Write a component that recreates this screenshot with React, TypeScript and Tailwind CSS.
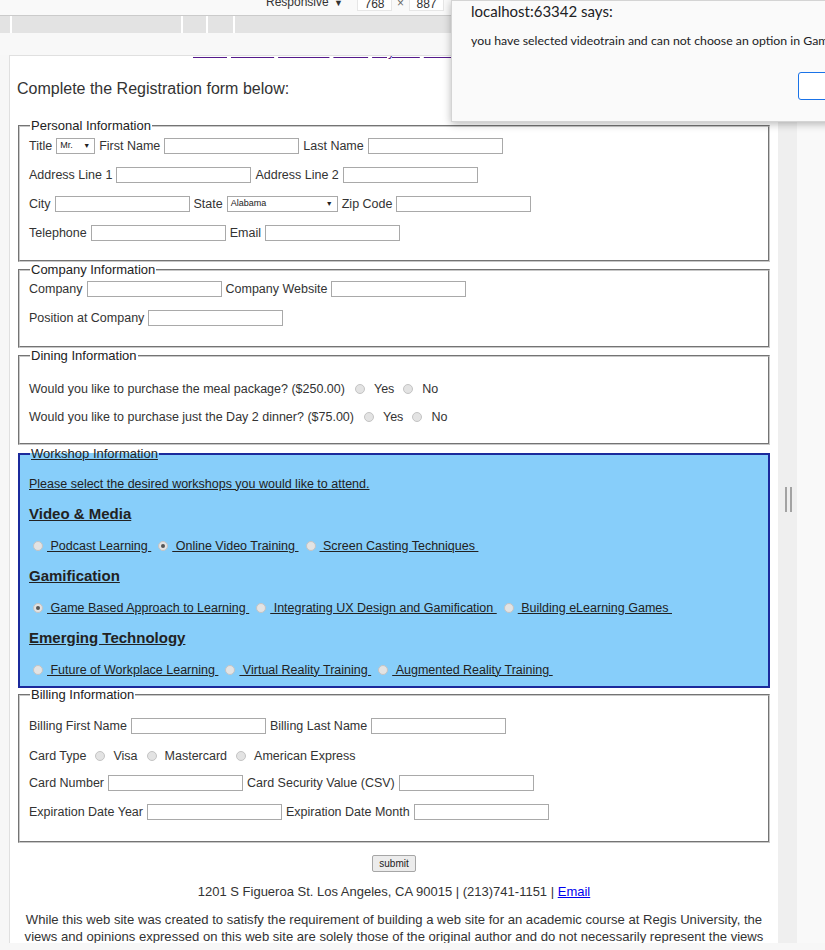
import React from "react";

type Kids = { children?: React.ReactNode; className?: string };

const Field = ({ w = "w-[135px]" }: { w?: string }) => (
  <span className={`h-[16px] ${w} shrink-0 border border-[#a9a9a9] bg-white`} />
);

const Select = ({ value, w }: { value: string; w: string }) => (
  <span
    className={`flex h-[16px] ${w} shrink-0 items-center justify-between border border-[#a9a9a9] bg-white pl-[3px] pr-[4px] text-[9px] text-[#222]`}
  >
    {value}
    <span className="text-[7px]">▼</span>
  </span>
);

const Radio = ({ checked, className = "" }: { checked?: boolean; className?: string }) => (
  <span
    className={`flex h-[10px] w-[10px] shrink-0 items-center justify-center rounded-full border border-[#c4c4c4] bg-[#e3e3e3] ${className}`}
  >
    {checked && <span className="h-[4px] w-[4px] rounded-full bg-[#555]" />}
  </span>
);

const Row = ({ children, className = "" }: Kids) => (
  <div className={`flex h-[20px] items-center gap-[4px] whitespace-nowrap ${className}`}>{children}</div>
);

const Box = ({ title, children, className = "" }: Kids & { title: string }) => (
  <fieldset className={`mx-[8px] border-2 border-[#c8c8c8] [border-style:groove] px-[9px] ${className}`}>
    <legend className="ml-[1px] px-[1px] text-[13px] leading-[15px] text-[#222]">{title}</legend>
    {children}
  </fieldset>
);

const Option = ({ label, checked, first }: { label: string; checked?: boolean; first?: boolean }) => (
  <>
    <Radio checked={checked} className={first ? "ml-[4px]" : "ml-[3px]"} />
    <span className="underline">{"\u00a0" + label + "\u00a0"}</span>
  </>
);

const Topic = ({ children }: Kids) => (
  <div className="mt-[10px] flex h-[20px] items-center text-[15px] font-bold text-[#222] underline">{children}</div>
);

const workshops = [
  {
    name: "Video & Media",
    items: [
      { label: "Podcast Learning" },
      { label: "Online Video Training", checked: true },
      { label: "Screen Casting Techniques" },
    ],
  },
  {
    name: "Gamification",
    items: [
      { label: "Game Based Approach to Learning", checked: true },
      { label: "Integrating UX Design and Gamification" },
      { label: "Building eLearning Games" },
    ],
  },
  {
    name: "Emerging Technology",
    items: [
      { label: "Future of Workplace Learning" },
      { label: "Virtual Reality Training" },
      { label: "Augmented Reality Training" },
    ],
  },
];

export default function App() {
  return (
    <div className="relative h-[950px] w-[825px] overflow-hidden bg-[#f7f7f7] font-['Liberation_Sans',Arial,sans-serif] text-[#333]">
      {/* devtools device toolbar */}
      <div className="flex h-[16px] items-start border-b border-[#cbcbcb] bg-[#f9f9f9] text-[12px] text-[#333]">
        <span className="-mt-[5px] ml-[266px] leading-[14px]">
          Responsive <span className="ml-[2px] text-[9px]">▼</span>
        </span>
        <span className="-mt-[3px] ml-[14px] h-[14px] w-[35px] border border-[#e6e6e6] bg-white text-center leading-[12px]">768</span>
        <span className="-mt-[4px] ml-[5px] leading-[14px] text-[#666]">×</span>
        <span className="-mt-[3px] ml-[5px] h-[14px] w-[35px] border border-[#e6e6e6] bg-white text-center leading-[12px]">887</span>
      </div>
      <div className="flex h-[17px] bg-[#e3e3e3]">
        <span className="ml-[10px] w-[2px] bg-white" />
        <span className="ml-[169px] w-[2px] bg-white" />
        <span className="ml-[23px] w-[2px] bg-white" />
        <span className="ml-[25px] w-[2px] bg-white" />
      </div>
      <div className="h-[22px] bg-[#f8f8f8]" />

      <div className="flex">
        <div className="w-[9px]" />
        <div className="h-[888px] w-[769px] shrink-0 overflow-hidden border-l border-t border-[#e0e0e0] bg-white">
          {/* top nav, mostly scrolled off */}
          <div className="h-[3px] overflow-hidden">
            <div className="-mt-[12px] ml-[183px] flex gap-[4px] text-[13px] leading-[15px] text-[#551a8b] underline">
              <span>About</span>
              <span>Awards</span>
              <span>Activities</span>
              <span>Meals</span>
              <span>Keynote</span>
              <span>Workshops</span>
            </div>
          </div>

          <h2 className="ml-[7px] mt-[21px] text-[16px] leading-[18px] text-[#333]">Complete the Registration form below:</h2>

          <div className="mt-[20px] text-[12.5px]">
            <Box title="Personal Information" className="pb-[17px]">
              <Row className="mt-[3px]">
                Title <Select value="Mr." w="w-[39px]" /> First Name <Field /> Last Name <Field />
              </Row>
              <Row className="mt-[9px]">
                Address Line 1 <Field /> Address Line 2 <Field />
              </Row>
              <Row className="mt-[9px]">
                City <Field /> State <Select value="Alabama" w="w-[111px]" /> Zip Code <Field />
              </Row>
              <Row className="mt-[9px]">
                Telephone <Field /> Email <Field />
              </Row>
            </Box>

            <Box title="Company Information" className="pb-[18px]">
              <Row className="mt-[2px]">
                Company <Field /> Company Website <Field />
              </Row>
              <Row className="mt-[9px]">
                Position at Company <Field />
              </Row>
            </Box>

            <Box title="Dining Information" className="pb-[16px]">
              <Row className="mt-[16px] gap-0">
                Would you like to purchase the meal package? ($250.00)
                <Radio className="ml-[6px] mr-[5px]" />
                Yes
                <Radio className="ml-[5px] mr-[5px]" />
                No
              </Row>
              <Row className="mt-[8px] gap-0">
                Would you like to purchase just the Day 2 dinner? ($75.00)
                <Radio className="ml-[6px] mr-[5px]" />
                Yes
                <Radio className="ml-[5px] mr-[5px]" />
                No
              </Row>
            </Box>

            <fieldset className="mx-[8px] mt-[1px] border-2 border-[#1b2a9c] bg-[#87cefa] px-[9px] pb-[6px]">
              <legend className="ml-[1px] px-[1px] text-[13px] leading-[15px] text-[#222] underline">Workshop Information</legend>
              <div className="mt-[13px] flex h-[20px] items-center text-[#222] underline">
                Please select the desired workshops you would like to attend.
              </div>
              {workshops.map((g) => (
                <div key={g.name}>
                  <Topic>{g.name}</Topic>
                  <Row className="mt-[12px] gap-0 text-[#222]">
                    {g.items.map((it, i) => (
                      <Option key={it.label} label={it.label} checked={it.checked} first={i === 0} />
                    ))}
                  </Row>
                </div>
              ))}
            </fieldset>

            <Box title="Billing Information" className="-mt-[1px] pb-[19px]">
              <Row className="mt-[14px]">
                Billing First Name <Field /> Billing Last Name <Field />
              </Row>
              <Row className="mt-[10px] gap-0">
                Card Type
                <Radio className="ml-[5px] mr-[4px]" />
                Visa
                <Radio className="ml-[5px] mr-[4px]" />
                Mastercard
                <Radio className="ml-[5px] mr-[4px]" />
                American Express
              </Row>
              <Row className="mt-[7px]">
                Card Number <Field /> Card Security Value (CSV) <Field />
              </Row>
              <Row className="mt-[9px]">
                Expiration Date Year <Field /> Expiration Date Month <Field />
              </Row>
            </Box>
          </div>

          <div className="mt-[12px] flex justify-center">
            <span className="flex h-[17px] w-[44px] items-center justify-center rounded-[2px] border border-[#a6a6a6] bg-[#ececec] text-[10px] text-[#222]">
              submit
            </span>
          </div>
          <p className="mt-[12px] text-center text-[13px] leading-[15px] text-[#333]">
            1201 S Figueroa St. Los Angeles, CA 90015 | (213)741-1151 |{" "}
            <span className="text-[#0000ee] underline">Email</span>
          </p>
          <p className="mt-[12px] whitespace-nowrap text-center text-[13.1px] leading-[17px] text-[#333]">
            While this web site was created to satisfy the requirement of building a web site for an academic course at Regis University, the
            <br />
            views and opinions expressed on this web site are solely those of the original author and do not necessarily represent the views
            <br />
            of Regis University.
          </p>
        </div>
        <div className="relative flex flex-1">
          <div className="h-[888px] w-[19px] bg-[#efefef]" />
          <div className="h-[888px] flex-1 bg-[#f9f9f9]" />
          <div className="absolute left-[7px] top-[432px] flex gap-[3px]">
            <span className="h-[25px] w-[2px] bg-[#a3a3a3]" />
            <span className="h-[25px] w-[2px] bg-[#a3a3a3]" />
          </div>
        </div>
      </div>

      {/* alert dialog */}
      <div className="absolute left-[451px] top-0 h-[122px] w-[420px] border border-[#d4d4d4] bg-[#fafafa] font-['Lato','Noto_Sans',sans-serif] text-[#202124] shadow-[0_2px_8px_rgba(0,0,0,0.28)]">
        <div className="ml-[19px] mt-0 text-[15px] leading-[20px]">localhost:63342 says:</div>
        <div className="ml-[19px] mt-[12px] whitespace-nowrap text-[12.3px] leading-[16px]">
          you have selected videotrain and can not choose an option in Gamification
        </div>
        <div className="ml-[346px] mt-[23px] h-[28px] w-[70px] rounded-[3px] border border-[#1a73e8] bg-white" />
      </div>
    </div>
  );
}
